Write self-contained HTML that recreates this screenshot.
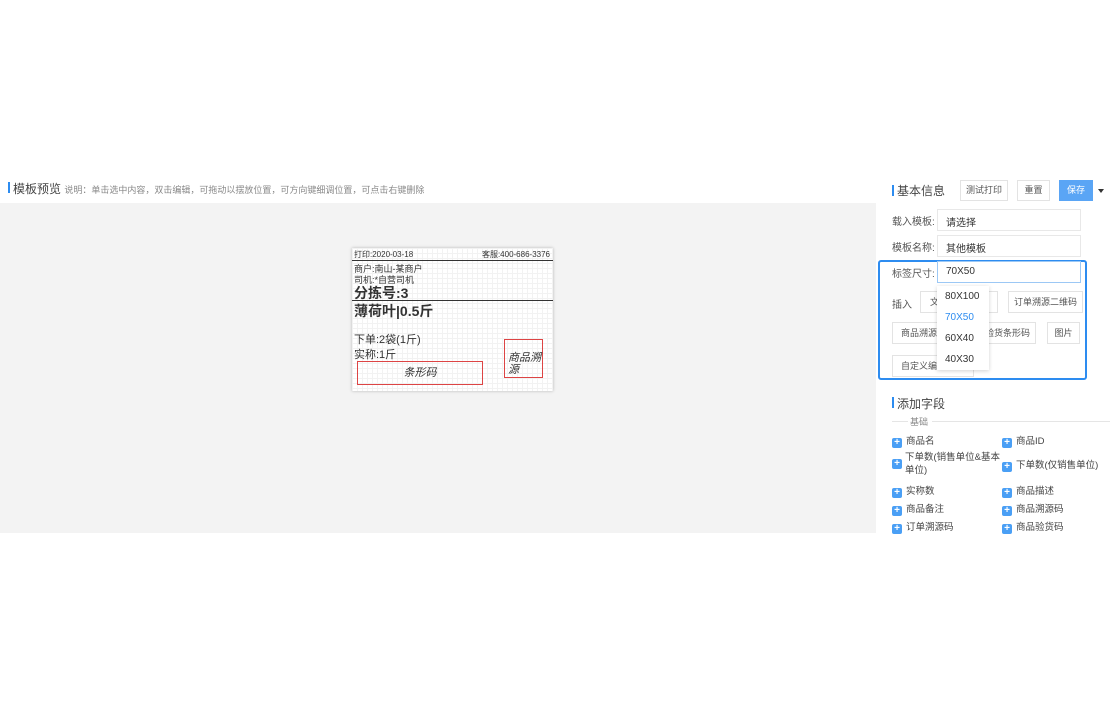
<!DOCTYPE html>
<html><head><meta charset="utf-8"><style>
body{margin:0;width:1110px;height:710px;background:#fff;font-family:"Liberation Sans","Noto Sans CJK SC",sans-serif;position:relative;overflow:hidden;color:#333}
.a{position:absolute;white-space:nowrap}
.bar{position:absolute;width:2px;background:#2d8cf0}
.gray{position:absolute;left:0;top:203px;width:876px;height:330px;background:#f3f3f3}
.card{position:absolute;left:352px;top:248px;width:201px;height:143px;background-color:#fff;background-image:linear-gradient(#f2f2f2 1px,transparent 1px),linear-gradient(90deg,#f2f2f2 1px,transparent 1px);background-size:5px 5px;box-shadow:0 0 3px rgba(0,0,0,.25)}
.btn{position:absolute;border:1px solid #e3e3e3;background:#fff;font-size:9px;color:#555;text-align:center;box-sizing:border-box;white-space:nowrap;overflow:hidden}
.inp{position:absolute;left:937px;width:144px;height:22px;border:1px solid #e8e8e8;box-sizing:border-box;font-size:10px;padding:4px 0 0 8px;color:#333}
.lbl{position:absolute;left:892px;font-size:10px;color:#555}
.plus{display:inline-block;width:10px;height:10px;background:#4a9ff5;border-radius:2px;color:#fff;font-size:10px;line-height:10px;text-align:center;vertical-align:-1px;margin-right:4px;font-weight:bold}
.f{position:absolute;font-size:9.5px;color:#444;white-space:nowrap}
</style></head><body>
<div class="bar" style="left:8px;top:182px;height:11px"></div>
<div class="a" style="left:13px;top:180px;font-size:12px;color:#444">模板预览 <span style="font-size:9px;color:#888">说明：单击选中内容，双击编辑，可拖动以摆放位置，可方向键细调位置，可点击右键删除</span></div>
<div class="gray"></div>
<div class="card">
 <div class="a" style="left:2px;top:1px;font-size:8px">打印:2020-03-18</div>
 <div class="a" style="right:3px;top:1px;font-size:8px">客服:400-686-3376</div>
 <div class="a" style="left:0;top:12px;width:201px;height:1px;background:#333"></div>
 <div class="a" style="left:2px;top:14px;font-size:9px">商户:南山-某商户</div>
 <div class="a" style="left:2px;top:25px;font-size:9px">司机:*自营司机</div>
 <div class="a" style="left:2px;top:35px;font-size:14px;font-weight:bold">分拣号:3</div>
 <div class="a" style="left:0;top:52px;width:201px;height:1px;background:#333"></div>
 <div class="a" style="left:2px;top:53px;font-size:14px;font-weight:bold">薄荷叶|0.5斤</div>
 <div class="a" style="left:2px;top:83px;font-size:11px">下单:2袋(1斤)</div>
 <div class="a" style="left:2px;top:98px;font-size:11px">实称:1斤</div>
 <div class="a" style="left:5px;top:113px;width:126px;height:24px;border:1px solid #d44;box-sizing:border-box;font-size:11px;font-style:italic;text-align:center;line-height:22px">条形码</div>
 <div class="a" style="left:152px;top:91px;width:39px;height:39px;border:1px solid #d44;box-sizing:border-box;font-size:11px;font-style:italic;line-height:12px;white-space:normal;padding:12px 0 0 3px">商品溯源</div>
</div>
<div class="a" style="left:876px;top:175px;width:234px;height:358px;background:#fff"></div>
<div class="bar" style="left:892px;top:185px;height:11px"></div>
<div class="a" style="left:897px;top:182px;font-size:12px;color:#444">基本信息</div>
<div class="btn" style="left:960px;top:180px;width:48px;height:21px;line-height:19px">测试打印</div>
<div class="btn" style="left:1017px;top:180px;width:33px;height:21px;line-height:19px">重置</div>
<div class="btn" style="left:1059px;top:180px;width:34px;height:21px;line-height:19px;background:#5aa5f5;border-color:#5aa5f5;color:#fff">保存</div>
<div class="a" style="left:1098px;top:189px;border:3px solid transparent;border-top:4px solid #333"></div>
<div class="lbl" style="top:213px">载入模板:</div><div class="inp" style="top:209px">请选择</div>
<div class="lbl" style="top:239px">模板名称:</div><div class="inp" style="top:235px">其他模板</div>
<div class="a" style="left:878px;top:260px;width:209px;height:120px;border:2px solid #2d8cf0;border-radius:3px;box-sizing:border-box"></div>
<div class="lbl" style="top:265px">标签尺寸:</div><div class="inp" style="top:261px;border-color:#9cc8f5">70X50</div>
<div class="lbl" style="top:296px">插入</div>
<div class="btn" style="left:920px;top:291px;width:78px;height:22px;line-height:20px;text-align:left;padding-left:9px">文</div>
<div class="btn" style="left:1008px;top:291px;width:75px;height:22px;line-height:20px">订单溯源二维码</div>
<div class="btn" style="left:892px;top:322px;width:80px;height:22px;line-height:20px;text-align:left;padding-left:8px">商品溯源二</div>
<div class="btn" style="left:975px;top:322px;width:61px;height:22px;line-height:20px;text-align:right;padding-right:5px">验货条形码</div>
<div class="btn" style="left:1047px;top:322px;width:33px;height:22px;line-height:20px">图片</div>
<div class="btn" style="left:892px;top:355px;width:82px;height:22px;line-height:20px;text-align:left;padding-left:8px">自定义编码</div>
<div class="a" style="left:937px;top:286px;width:52px;height:84px;background:#fff;box-shadow:0 1px 4px rgba(0,0,0,.18);font-size:10px">
 <div class="a" style="left:8px;top:5px">80X100</div>
 <div class="a" style="left:8px;top:26px;color:#2d8cf0">70X50</div>
 <div class="a" style="left:8px;top:47px">60X40</div>
 <div class="a" style="left:8px;top:68px">40X30</div>
</div>
<div class="bar" style="left:892px;top:397px;height:11px"></div>
<div class="a" style="left:897px;top:395px;font-size:12px;color:#444">添加字段</div>
<div class="a" style="left:892px;top:421px;width:16px;height:1px;background:#e5e5e5"></div>
<div class="a" style="left:910px;top:415px;font-size:9px;color:#888">基础</div>
<div class="a" style="left:932px;top:421px;width:178px;height:1px;background:#e5e5e5"></div>
<div class="f" style="left:892px;top:433px"><span class="plus">+</span>商品名</div>
<div class="f" style="left:1002px;top:433px"><span class="plus">+</span>商品ID</div>
<div class="f" style="left:892px;top:457px"><span class="plus">+</span></div>
<div class="f" style="left:905px;top:451px;line-height:13px">下单数(销售单位&amp;基本<br>单位)</div>
<div class="f" style="left:1002px;top:457px"><span class="plus">+</span>下单数(仅销售单位)</div>
<div class="f" style="left:892px;top:483px"><span class="plus">+</span>实称数</div>
<div class="f" style="left:1002px;top:483px"><span class="plus">+</span>商品描述</div>
<div class="f" style="left:892px;top:501px"><span class="plus">+</span>商品备注</div>
<div class="f" style="left:1002px;top:501px"><span class="plus">+</span>商品溯源码</div>
<div class="f" style="left:892px;top:519px"><span class="plus">+</span>订单溯源码</div>
<div class="f" style="left:1002px;top:519px"><span class="plus">+</span>商品验货码</div>
</body></html>
